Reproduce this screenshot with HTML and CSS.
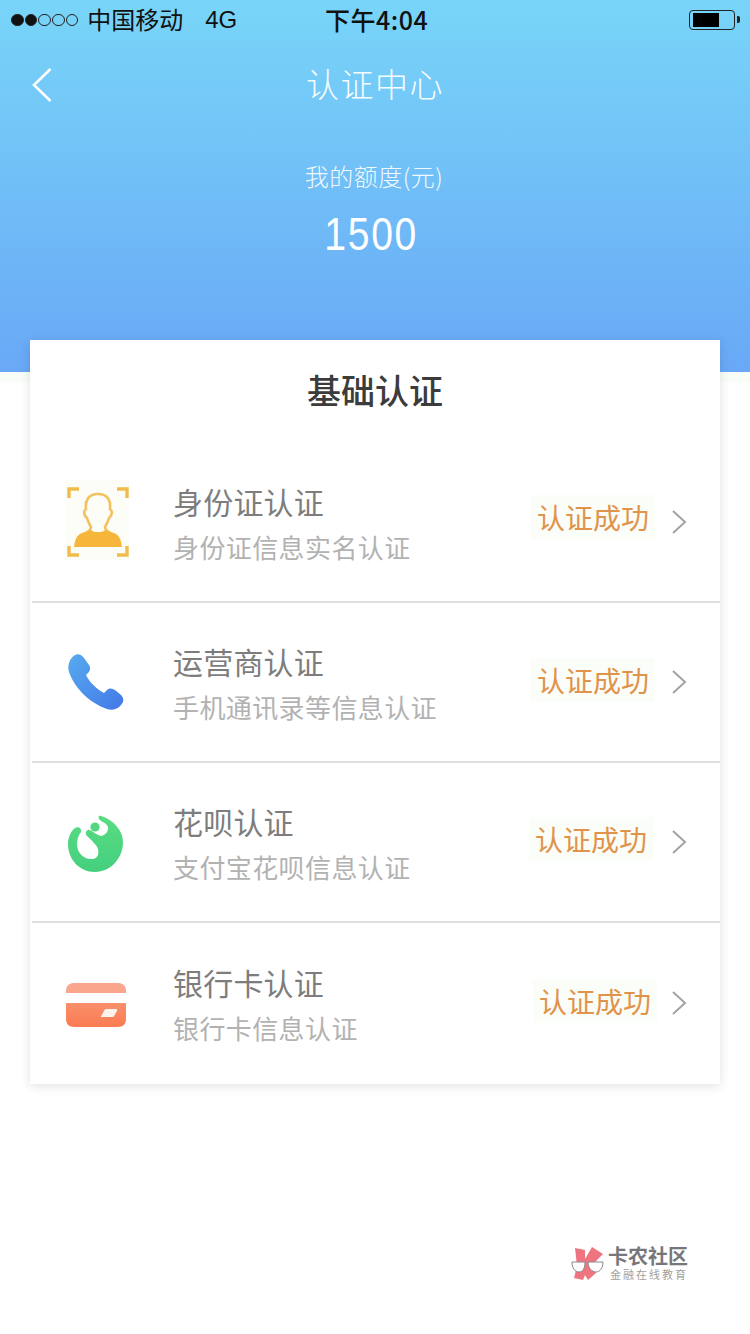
FILE: index.html
```html
<!DOCTYPE html>
<html lang="en">
<head>
  <meta charset="UTF-8">
  <title>认证中心</title>
  <link rel="stylesheet" href="styles.css">
</head>
<body>
  <div class="header">
    <div class="status-bar">
      <div class="status-left">
        <span class="signal">
          <i class="dot on"></i><i class="dot on"></i><i class="dot"></i><i class="dot"></i><i class="dot"></i>
        </span>
        <span class="carrier">中国移动</span>
        <span class="network">4G</span>
      </div>
      <div class="clock">下午4:04</div>
      <div class="battery"><div class="battery-level"></div></div>
    </div>

    <div class="nav">
      <svg class="back" width="22" height="36" viewBox="0 0 22 36">
        <path d="M19.5 2 L3 18 L19.5 34" fill="none" stroke="#fff" stroke-width="2.6"/>
      </svg>
      <div class="nav-title">认证中心</div>
    </div>

    <div class="quota-label">我的额度(元)</div>
    <div class="quota-value"><span class="quota-digits">1500</span></div>
  </div>
  <div class="header-edge"></div>

  <div class="card">
    <h2 class="card-title">基础认证</h2>

    <div class="row">
      <div class="row-icon">
        <svg width="64" height="80" viewBox="0 0 64 80">
          <rect x="0" y="0" width="64" height="80" fill="#fbfdf6"/>
          <path d="M4 18 V9 H14 M52 9 H62 V18 M4 66 V75 H14 M52 75 H62 V66" fill="none" stroke="#f1bc4c" stroke-width="3.4"/>
          <path d="M33 14 C23 14 20 21 21 29 C18 31 19 36 22 38 C23 42 25 45 26 47 C26 50 23 52 19 54 L47 54 C43 52 40 50 40 47 C41 45 43 42 44 38 C47 36 48 31 45 29 C46 21 43 14 33 14 Z" fill="#fdfdf8" stroke="#f2c25e" stroke-width="2.6"/>
          <path d="M17 53 C21 52 24 51 26 50 C29 53 37 53 40 50 C42 51 45 52 49 53 C54 55 56 59 57 67 H9 C10 59 12 55 17 53 Z" fill="#f5b63a"/>
        </svg>
      </div>
      <div class="row-text">
        <div class="row-name">身份证认证</div>
        <div class="row-desc">身份证信息实名认证</div>
      </div>
      <div class="row-status nudge-up">认证成功</div>
      <svg class="chevron" width="16" height="26" viewBox="0 0 16 26">
        <path d="M2 2 L14 13 L2 24" fill="none" stroke="#a3a3a3" stroke-width="2"/>
      </svg>
    </div>

    <div class="row">
      <div class="row-icon">
        <svg width="64" height="80" viewBox="0 0 64 80">
          <defs>
            <linearGradient id="phoneFill" x1="0" y1="0" x2="1" y2="1">
              <stop offset="0" stop-color="#57aaf0"/>
              <stop offset="1" stop-color="#4379e6"/>
            </linearGradient>
          </defs>
          <path d="M10 15 C13 13 17 15 19 18 L24 25 C26 28 25 31 23 33 L21 35 C25 43 32 49 39 53 L42 50 C44 48 47 48 50 50 L56 55 C59 58 59 62 56 65 C53 69 47 71 42 69 C25 63 10 49 4 32 C2 25 5 18 10 15 Z" fill="url(#phoneFill)"/>
        </svg>
      </div>
      <div class="row-text">
        <div class="row-name">运营商认证</div>
        <div class="row-desc">手机通讯录等信息认证</div>
      </div>
      <div class="row-status">认证成功</div>
      <svg class="chevron" width="16" height="26" viewBox="0 0 16 26">
        <path d="M2 2 L14 13 L2 24" fill="none" stroke="#a3a3a3" stroke-width="2"/>
      </svg>
    </div>

    <div class="row">
      <div class="row-icon">
        <svg width="64" height="80" viewBox="0 0 64 80">
          <defs>
            <linearGradient id="leafFill" x1="0" y1="0" x2="0" y2="1">
              <stop offset="0" stop-color="#5adc82"/>
              <stop offset="1" stop-color="#44cf7e"/>
            </linearGradient>
          </defs>
          <path d="M36 16 C49 20 58 31 58 42 C58 58 46 72 30 72 C14 72 3 59 3 44 C3 37 6 31 10 28 C13 26 17 28 16 32 C13 36 12 40 12 44 C12 53 19 60 28 59 C33 58 34 54 33 49 C32 45 27 41 22 36 C19 33 22 29 25 30 C29 32 32 35 36 36 C41 35 45 30 42 25 C39 22 35 21 34 19 C33 16 34 15 36 16 Z" fill="url(#leafFill)"/>
          <circle cx="30" cy="27" r="4.6" fill="#52d680"/>
        </svg>
      </div>
      <div class="row-text">
        <div class="row-name">花呗认证</div>
        <div class="row-desc">支付宝花呗信息认证</div>
      </div>
      <div class="row-status nudge-left">认证成功</div>
      <svg class="chevron" width="16" height="26" viewBox="0 0 16 26">
        <path d="M2 2 L14 13 L2 24" fill="none" stroke="#a3a3a3" stroke-width="2"/>
      </svg>
    </div>

    <div class="row">
      <div class="row-icon">
        <svg width="64" height="80" viewBox="0 0 64 80">
          <defs>
            <linearGradient id="cardFill" x1="0" y1="0" x2="0" y2="1">
              <stop offset="0" stop-color="#f98f6b"/>
              <stop offset="1" stop-color="#fa7c52"/>
            </linearGradient>
          </defs>
          <path d="M1 30 C1 25 4 22 9 22 H53 C58 22 61 25 61 30 V32 H1 Z" fill="#f9a68c"/>
          <path d="M1 42 H61 V58 C61 63 58 66 53 66 H9 C4 66 1 63 1 58 Z" fill="url(#cardFill)"/>
          <path d="M39 50 C39.500 48.500 40 48 42 48 H51 C52 48 52.500 48.500 52 50 L49 55 C48.500 56 48 56 47 56 H37 C36 56 35.700 55.500 36 55 Z" fill="#fdf3ec"/>
        </svg>
      </div>
      <div class="row-text">
        <div class="row-name">银行卡认证</div>
        <div class="row-desc">银行卡信息认证</div>
      </div>
      <div class="row-status nudge-right">认证成功</div>
      <svg class="chevron" width="16" height="26" viewBox="0 0 16 26">
        <path d="M2 2 L14 13 L2 24" fill="none" stroke="#a3a3a3" stroke-width="2"/>
      </svg>
    </div>
  </div>

  <div class="brand">
    <svg width="36" height="38" viewBox="0 0 36 38">
      <path d="M4 2 L14 4 L14 13 L21 1 L32 8 L24 16 L25 27 L17 34 L14 29 L12 34 L3 32 L6 20 Z" fill="#ee7480"/>
      <path d="M1 16 H14 C14 22 12 26 8 26 C4 26 1 22 1 16 Z" fill="#fff" stroke="#8a8a8a" stroke-width="1"/>
      <path d="M17 16 H32 C32 22 29 26 25 26 C21 26 17 22 17 16 Z" fill="#fff" stroke="#8a8a8a" stroke-width="1"/>
    </svg>
    <div class="brand-text">
      <div class="brand-name">卡农社区</div>
      <div class="brand-tag">金融在线教育</div>
    </div>
  </div>
</body>
</html>
```

FILE: styles.css
```css
* {
  box-sizing: border-box;
}

body {
  margin: 0;
  width: 750px;
  height: 1334px;
  overflow: hidden;
  background: #fff;
  font-family: "Noto Sans CJK SC", "Liberation Sans", sans-serif;
}

.header {
  height: 372px;
  background: linear-gradient(180deg, #78d5f8, #69a8f6);
  color: #fff;
}

.header-edge {
  height: 10px;
  background: #f8fdf8;
}

.status-bar {
  height: 40px;
  padding: 0 12px 0 11px;
  display: flex;
  align-items: center;
  position: relative;
  color: #111;
}

.status-left {
  display: flex;
  align-items: center;
  font-size: 24px;
  margin-top: -4px;
}

.signal {
  display: flex;
  gap: 1.2px;
  margin-right: 9px;
  margin-top: 4px;
}

.dot {
  width: 12.5px;
  height: 12.5px;
  border-radius: 50%;
  border: 1px solid #222;
}

.dot.on {
  background: #111;
}

.network {
  margin-left: 22px;
  margin-top: 4px;
  font-family: "Liberation Sans", sans-serif;
}

.clock {
  position: absolute;
  left: 325px;
  top: 3px;
  font-size: 25px;
  line-height: 32px;
  font-weight: 500;
  letter-spacing: 0.5px;
}

.battery {
  margin-left: auto;
  margin-right: 3px;
  width: 46px;
  height: 20px;
  border: 1.5px solid #222;
  border-radius: 4px;
  padding: 2px 3px;
  position: relative;
}

.battery::after {
  content: "";
  position: absolute;
  right: -6px;
  top: 5px;
  width: 3px;
  height: 7px;
  background: #222;
  border-radius: 0 2px 2px 0;
}

.battery-level {
  width: 26px;
  height: 100%;
  background: #000;
}

.nav {
  height: 90px;
  display: flex;
  align-items: center;
  justify-content: center;
  position: relative;
}

.back {
  position: absolute;
  left: 31px;
  top: 27px;
}

.nav-title {
  font-size: 33px;
  font-weight: 300;
  letter-spacing: 1.5px;
  opacity: 0.95;
  margin-top: -4px;
}

.quota-label {
  margin-top: 28px;
  text-align: center;
  font-size: 24px;
  line-height: 36px;
  font-weight: 300;
  letter-spacing: 0.5px;
  opacity: 0.9;
  margin-left: -2px;
}

.quota-value {
  margin-top: 14px;
  text-align: center;
  font-family: "Liberation Sans", sans-serif;
  font-size: 46px;
  line-height: 52px;
  letter-spacing: 2px;
  margin-left: -8px;
}

.quota-digits {
  display: inline-block;
  transform: scaleX(0.85);
}

.card {
  width: 690px;
  height: 744px;
  margin: -42px 0 0 30px;
  position: relative;
  background: #fff;
  box-shadow: 0 2px 10px rgba(0,0,0,0.12);
}

.card-title {
  margin: 0;
  height: 103px;
  padding-top: 26px;
  text-align: center;
  font-size: 34px;
  line-height: 48px;
  font-weight: 500;
  color: #3c3c3c;
}

.row {
  height: 160px;
  margin-left: 2px;
  padding: 0 33px 0 33px;
  display: flex;
  align-items: center;
  border-bottom: 2px solid #dfdfdf;
}

.row:last-child {
  border-bottom: none;
}

.row-icon {
  width: 64px;
  height: 80px;
  margin-top: -4px;
}

.row-text {
  margin-left: 44px;
  flex: 1;
}

.row-name {
  font-size: 30px;
  line-height: 44px;
  letter-spacing: 0.2px;
  color: #7d7d7d;
}

.row-desc {
  margin-top: 5px;
  font-size: 26px;
  line-height: 38px;
  letter-spacing: 0.4px;
  color: #b2b2b2;
}

.row-status {
  padding: 4px 6px;
  font-size: 28px;
  line-height: 36px;
  color: #e0934a;
  background: #fbfdf8;
  margin-top: -4px;
}

.row-status.nudge-up {
  margin-top: -10px;
}

.row-status.nudge-left {
  margin-top: -6px;
  margin-right: 2px;
}

.row-status.nudge-right {
  margin-right: -2px;
}

.chevron {
  margin-left: 16px;
  margin-top: -1px;
}

.brand {
  position: absolute;
  left: 571px;
  top: 1246px;
  display: flex;
  gap: 1px;
  font-family: "Liberation Sans", "Noto Sans CJK SC", sans-serif;
}

.brand-text {
  color: #77777b;
}

.brand-name {
  font-size: 20px;
  line-height: 23px;
  font-weight: 700;
}

.brand-tag {
  font-size: 11px;
  line-height: 13px;
  letter-spacing: 2px;
  margin-left: 2px;
  color: #a0a0a0;
}
```
